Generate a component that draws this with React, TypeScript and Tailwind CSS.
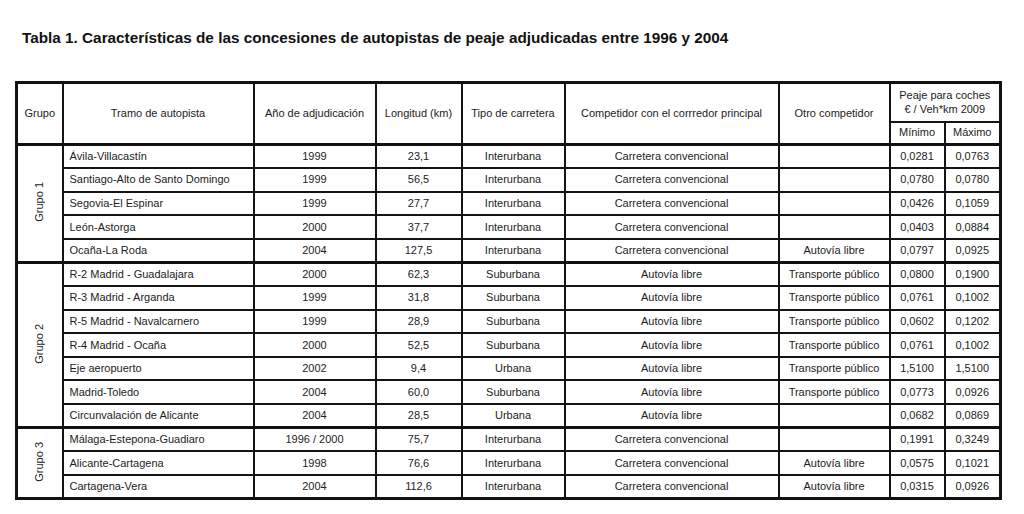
const groups = [
  {
    name: "Grupo 1",
    rows: [
      ["Ávila-Villacastín", "1999", "23,1", "Interurbana", "Carretera convencional", "", "0,0281", "0,0763"],
      ["Santiago-Alto de Santo Domingo", "1999", "56,5", "Interurbana", "Carretera convencional", "", "0,0780", "0,0780"],
      ["Segovia-El Espinar", "1999", "27,7", "Interurbana", "Carretera convencional", "", "0,0426", "0,1059"],
      ["León-Astorga", "2000", "37,7", "Interurbana", "Carretera convencional", "", "0,0403", "0,0884"],
      ["Ocaña-La Roda", "2004", "127,5", "Interurbana", "Carretera convencional", "Autovía libre", "0,0797", "0,0925"],
    ],
  },
  {
    name: "Grupo 2",
    rows: [
      ["R-2 Madrid - Guadalajara", "2000", "62,3", "Suburbana", "Autovía libre", "Transporte público", "0,0800", "0,1900"],
      ["R-3 Madrid - Arganda", "1999", "31,8", "Suburbana", "Autovía libre", "Transporte público", "0,0761", "0,1002"],
      ["R-5 Madrid - Navalcarnero", "1999", "28,9", "Suburbana", "Autovía libre", "Transporte público", "0,0602", "0,1202"],
      ["R-4 Madrid - Ocaña", "2000", "52,5", "Suburbana", "Autovía libre", "Transporte público", "0,0761", "0,1002"],
      ["Eje aeropuerto", "2002", "9,4", "Urbana", "Autovía libre", "Transporte público", "1,5100", "1,5100"],
      ["Madrid-Toledo", "2004", "60,0", "Suburbana", "Autovía libre", "Transporte público", "0,0773", "0,0926"],
      ["Circunvalación de Alicante", "2004", "28,5", "Urbana", "Autovía libre", "", "0,0682", "0,0869"],
    ],
  },
  {
    name: "Grupo 3",
    rows: [
      ["Málaga-Estepona-Guadiaro", "1996 / 2000", "75,7", "Interurbana", "Carretera convencional", "", "0,1991", "0,3249"],
      ["Alicante-Cartagena", "1998", "76,6", "Interurbana", "Carretera convencional", "Autovía libre", "0,0575", "0,1021"],
      ["Cartagena-Vera", "2004", "112,6", "Interurbana", "Carretera convencional", "Autovía libre", "0,0315", "0,0926"],
    ],
  },
];

const cell = "border-2 border-[#141414] px-[6px] py-0";

export default function App() {
  return (
    <div className="w-[1024px] h-[514px] bg-white font-['Liberation_Sans',Arial,sans-serif] text-[#1c1c1c] overflow-hidden">
      <h1 className="pl-[22px] pt-[29px] text-[15.3px] font-bold leading-[18px] text-[#111]">
        Tabla 1. Características de las concesiones de autopistas de peaje adjudicadas entre 1996 y 2004
      </h1>
      <table className="ml-[15px] mt-[34px] w-[984px] table-fixed border-collapse border-[3px] border-[#111] text-[11px] leading-[13px]">
        <colgroup>
          <col className="w-[46px]" />
          <col className="w-[191px]" />
          <col className="w-[122px]" />
          <col className="w-[86px]" />
          <col className="w-[103px]" />
          <col className="w-[214px]" />
          <col className="w-[111px]" />
          <col className="w-[55px]" />
          <col className="w-[56px]" />
        </colgroup>
        <thead>
          <tr className="h-[39px]">
            <th rowSpan={2} className={`${cell} px-0 font-normal`}>Grupo</th>
            <th rowSpan={2} className={`${cell} font-normal`}>Tramo de autopista</th>
            <th rowSpan={2} className={`${cell} font-normal`}>Año de adjudicación</th>
            <th rowSpan={2} className={`${cell} font-normal`}>Longitud (km)</th>
            <th rowSpan={2} className={`${cell} font-normal`}>Tipo de carretera</th>
            <th rowSpan={2} className={`${cell} font-normal`}>Competidor con el corrredor principal</th>
            <th rowSpan={2} className={`${cell} font-normal`}>Otro competidor</th>
            <th colSpan={2} className={`${cell} font-normal leading-[14px]`}>
              Peaje para coches
              <br />€ / Veh*km 2009
            </th>
          </tr>
          <tr className="h-[23px]">
            <th className={`${cell} px-0 font-normal`}>Mínimo</th>
            <th className={`${cell} px-0 font-normal`}>Máximo</th>
          </tr>
        </thead>
        {groups.map((g) => (
          <tbody key={g.name} className="border-t-[3px] border-[#111]">
            {g.rows.map((r, i) => (
              <tr key={r[0]} className="h-[23.6px]">
                {i === 0 && (
                  <td rowSpan={g.rows.length} className={`${cell} px-0 text-center`}>
                    <span className="inline-block rotate-180 [writing-mode:vertical-rl]">{g.name}</span>
                  </td>
                )}
                <td className={`${cell} pl-[6px]`}>{r[0]}</td>
                <td className={`${cell} text-center`}>{r[1]}</td>
                <td className={`${cell} text-center`}>{r[2]}</td>
                <td className={`${cell} text-center`}>{r[3]}</td>
                <td className={`${cell} text-center`}>{r[4]}</td>
                <td className={`${cell} text-center`}>{r[5]}</td>
                <td className={`${cell} px-0 text-center`}>{r[6]}</td>
                <td className={`${cell} px-0 text-center`}>{r[7]}</td>
              </tr>
            ))}
          </tbody>
        ))}
      </table>
    </div>
  );
}
